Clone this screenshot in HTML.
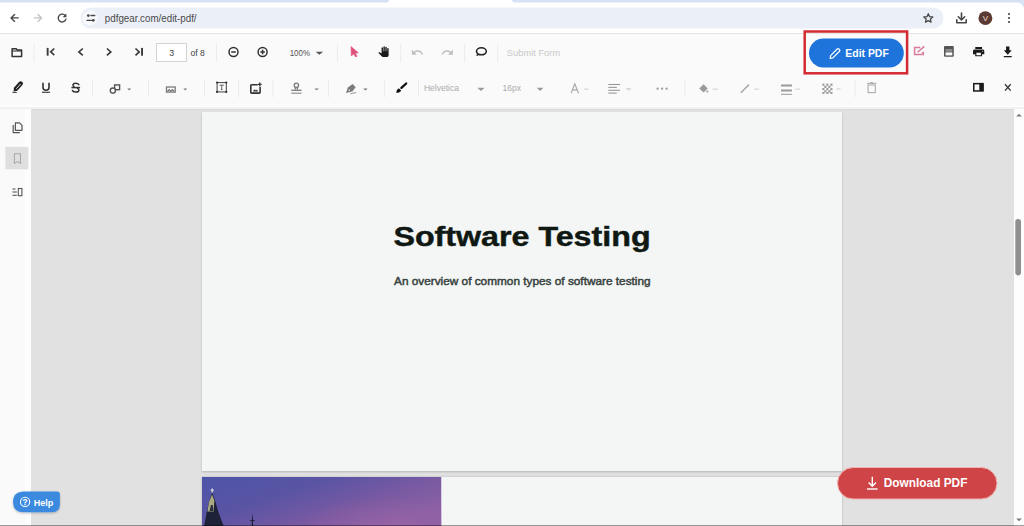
<!DOCTYPE html>
<html><head><meta charset="utf-8">
<style>
*{margin:0;padding:0;box-sizing:border-box}
html,body{width:1024px;height:526px;overflow:hidden;background:#fff;font-family:"Liberation Sans",sans-serif}
.a{position:absolute}
svg{position:absolute;left:0;top:0;overflow:visible}
text{font-family:"Liberation Sans",sans-serif}
#tb{left:0;top:34px;width:1024px;height:75px;background:#fafafa}
#side{left:0;top:109px;width:31px;height:417px;background:#fafafa;border-right:6px solid #fdfdfd}
#view{left:31px;top:109px;width:983px;height:417px;background:#e1e1e1}
#scroll{left:1014px;top:109px;width:10px;height:417px;background:#fdfdfd}
#page1{left:202px;top:112px;width:640px;height:359px;background:#f4f6f5;box-shadow:0 1px 2px rgba(0,0,0,.2)}
#page2{left:202px;top:477px;width:640px;height:60px;background:#f4f6f5;box-shadow:0 0 2px rgba(0,0,0,.2)}
</style></head><body>
<div id="tb" class="a"></div>
<div id="side" class="a"></div>
<div id="view" class="a"></div>
<div id="scroll" class="a"></div>
<div id="page1" class="a"></div>
<div id="page2" class="a"></div>

<svg width="1024" height="526" viewBox="0 0 1024 526">
<!-- browser chrome -->
<rect x="0" y="0" width="1024" height="33" fill="#fff"/>
<rect x="-10" y="-4" width="399" height="6.5" rx="3" fill="#d6e1f3"/>
<rect x="512" y="-4" width="522" height="6.5" rx="3" fill="#d6e1f3"/>
<path d="M1016 2.5H1024V10Q1024 2.5 1016 2.5Z" fill="#d6e1f3"/>
<rect x="0" y="33" width="1024" height="1" fill="#e4e4e4"/>
<rect x="80.5" y="7.5" width="863" height="21" rx="10.5" fill="#ebeff7"/>
<circle cx="90" cy="18" r="7.5" fill="#f7f9fc"/>
<g fill="none" stroke="#474747" stroke-width="1.35" stroke-linecap="round" stroke-linejoin="round">
 <path d="M18.2 17.9H11.2M14.6 14.4L11 17.9L14.6 21.4"/>
 <path d="M34.5 17.9H41.3M38 14.4L41.5 17.9L38 21.4" stroke="#c2c2c2"/>
 <path d="M65.6 16.2A3.9 3.9 0 1 0 65.9 19.2"/>
</g>
<path d="M66.4 13.4V17.2H62.6Z" fill="#474747"/>
<g stroke="#474747" stroke-width="1.3" stroke-linecap="round">
 <line x1="91" y1="15.5" x2="94.8" y2="15.5"/>
 <line x1="87" y1="20.4" x2="91.5" y2="20.4"/>
</g>
<circle cx="88.3" cy="15.6" r="1.35" fill="#474747"/>
<circle cx="93.3" cy="20.3" r="1.4" fill="#474747"/>
<text x="104.8" y="22" font-size="10" fill="#4a4a4a" textLength="91.8" lengthAdjust="spacingAndGlyphs">pdfgear.com/edit-pdf/</text>
<path d="M928.3 13.8L929.6 16.7L932.8 17L930.4 19.1L931.1 22.2L928.3 20.6L925.5 22.2L926.2 19.1L923.8 17L927 16.7Z" fill="none" stroke="#474747" stroke-width="1.3" stroke-linejoin="round"/>
<g fill="none" stroke="#474747" stroke-width="1.6" stroke-linecap="round" stroke-linejoin="round">
 <path d="M961.5 13V19.8M958.3 16.8L961.5 20L964.7 16.8"/>
 <path d="M956.8 19.8V22.7H966.2V19.8"/>
</g>
<circle cx="985.4" cy="18.2" r="6.9" fill="#5b3b31"/>
<text x="985.4" y="21.2" font-size="8" fill="#f3dcd4" text-anchor="middle">V</text>
<circle cx="1009" cy="14" r="1.1" fill="#474747"/>
<circle cx="1009" cy="18" r="1.1" fill="#474747"/>
<circle cx="1009" cy="22" r="1.1" fill="#474747"/>

<!-- PDF toolbar row1 -->
<g fill="#ececec">
 <rect x="33.5" y="44" width="1" height="18.5"/>
 <rect x="216" y="44" width="1" height="18"/>
 <rect x="337" y="44" width="1" height="18"/>
 <rect x="400.2" y="44" width="1" height="18"/>
 <rect x="464.1" y="44" width="1" height="18"/>
 <rect x="497.2" y="44" width="1" height="18"/>
</g>
<path d="M12.1 48.8H16.2L17.5 50.1H21.6V56.6H12.1Z" fill="none" stroke="#333" stroke-width="1.5" stroke-linejoin="round"/>
<line x1="12.1" y1="51" x2="21.6" y2="51" stroke="#333" stroke-width="1.1"/>
<rect x="46.7" y="47.9" width="1.9" height="7.8" fill="#3a3a3a"/>
<g fill="none" stroke="#3a3a3a" stroke-width="1.65" stroke-linejoin="miter">
 <path d="M54.3 48.5L50.7 51.8L54.3 55.2"/>
 <path d="M82.8 48.5L78.9 51.9L82.8 55.3"/>
 <path d="M106.9 48.5L110.8 51.9L106.9 55.3"/>
 <path d="M135.5 48.5L139.2 51.9L135.5 55.3"/>
</g>
<rect x="141.1" y="47.9" width="1.9" height="7.8" fill="#3a3a3a"/>
<rect x="156.5" y="43.5" width="30" height="18" fill="#fff" stroke="#d3d3d3" stroke-width="1"/>
<text x="171.7" y="55.9" font-size="8.8" fill="#444" text-anchor="middle">3</text>
<text x="190.4" y="56" font-size="9.4" fill="#444" textLength="14.4" lengthAdjust="spacingAndGlyphs">of 8</text>
<g fill="none" stroke="#333" stroke-width="1.5">
 <circle cx="233.5" cy="52" r="4.5"/>
 <line x1="231.2" y1="52" x2="235.8" y2="52"/>
 <circle cx="262.6" cy="52" r="4.5"/>
 <line x1="260.3" y1="52" x2="264.9" y2="52"/>
 <line x1="262.6" y1="49.7" x2="262.6" y2="54.3"/>
</g>
<text x="289.7" y="55.8" font-size="9.6" fill="#555" textLength="20.3" lengthAdjust="spacingAndGlyphs">100%</text>
<path d="M315.6 51.8H323.1L319.35 54.8Z" fill="#555"/>
<path d="M351 46.5L358.3 52.8L355.3 53.2L357.1 56.2L355.6 56.9L353.8 53.9L351.3 55.9Z" fill="#e0527d" stroke="#e0527d" stroke-width="0.6" stroke-linejoin="round"/>
<path transform="translate(377.8 46.25) scale(0.47 0.445)" fill="#1a1a1a" d="M23 5.5V20c0 2.2-1.8 4-4 4h-7.3c-1.08 0-2.1-.43-2.85-1.19L1 14.83s1.26-1.23 1.3-1.25c.22-.19.49-.29.79-.29.22 0 .42.06.6.16.04.01 4.31 2.46 4.31 2.46V4c0-.83.67-1.5 1.5-1.5S11 3.17 11 4v7h1V1.5c0-.83.67-1.5 1.5-1.5S15 .67 15 1.5V11h1V2.5c0-.83.67-1.5 1.5-1.5s1.5.67 1.5 1.5V11h1V5.5c0-.83.67-1.5 1.5-1.5s1.5.67 1.5 1.5z"/>
<path transform="translate(410.8 45.85) scale(0.55)" fill="#bdbdbd" d="M12.5 8c-2.65 0-5.05.99-6.9 2.6L2 7v9h9l-3.62-3.62c1.39-1.16 3.16-1.88 5.12-1.88 3.54 0 6.55 2.31 7.6 5.5l2.37-.78C21.08 11.03 17.15 8 12.5 8z"/>
<path transform="translate(440.75 45.85) scale(0.55)" fill="#bdbdbd" d="M18.4 10.6C16.55 8.99 14.15 8 11.5 8c-4.65 0-8.58 3.03-9.96 7.22L3.9 16c1.05-3.19 4.05-5.5 7.6-5.5 1.95 0 3.73.72 5.12 1.88L13 16h9V7l-3.6 3.6z"/>
<g fill="none" stroke="#222" stroke-width="1.6" stroke-linejoin="round">
 <ellipse cx="481.4" cy="51.3" rx="4.9" ry="3.5"/>
</g>
<path d="M477.2 53.3L476.2 56.2L480.2 54.6Z" fill="#222"/>
<text x="506.8" y="56" font-size="9.6" fill="#c9c9c9" textLength="53.4" lengthAdjust="spacingAndGlyphs">Submit Form</text>
<rect x="804.7" y="31.5" width="102.4" height="41.8" fill="none" stroke="#d42a32" stroke-width="2.5"/>
<rect x="809" y="38.6" width="94.8" height="28.8" rx="14.4" fill="#1f74dc"/>
<path d="M830.2 58.3L830.6 55.6L837.2 49A1.2 1.2 0 0 1 838.9 49L839.5 49.6A1.2 1.2 0 0 1 839.5 51.3L832.9 57.9Z" fill="none" stroke="#fff" stroke-width="1.2" stroke-linejoin="round"/>
<text x="845.3" y="56.6" font-size="10.9" font-weight="bold" fill="#fff" textLength="43.5" lengthAdjust="spacingAndGlyphs">Edit PDF</text>
<g fill="none" stroke="#db7b9b" stroke-width="1.5">
 <path d="M920.2 47.4H914.6V54.5H922.5"/>
 <path d="M917.6 52.3L924.3 46.4"/>
</g>
<path d="M921.2 52.8L924 51.4L924 56.2Z" fill="#db7b9b"/>
<rect x="944" y="46" width="9.8" height="10.8" rx="1" fill="#555"/>
<rect x="945.5" y="49" width="6.8" height="2.8" fill="#8c8c8c"/>
<rect x="945.5" y="52.4" width="6.8" height="3" fill="#fafafa"/>
<path transform="translate(971.87 45.44) scale(0.565 0.52)" fill="#1a1a1a" d="M19 8H5c-1.66 0-3 1.34-3 3v6h4v4h12v-4h4v-6c0-1.66-1.34-3-3-3zm-3 11H8v-5h8v5zm3-7c-.55 0-1-.45-1-1s.45-1 1-1 1 .45 1 1-.45 1-1 1zm-1-9H6v4h12V3z"/>
<path transform="translate(1000.98 44.5) scale(0.564 0.635)" fill="#1a1a1a" d="M19 9h-4V3H9v6H5l7 7 7-7zM5 18v2h14v-2H5z"/>

<!-- row2 -->
<g fill="#ececec">
 <rect x="92" y="80" width="1" height="17"/>
 <rect x="148" y="80" width="1" height="17"/>
 <rect x="204" y="80" width="1" height="17"/>
 <rect x="238.2" y="80" width="1" height="17"/>
 <rect x="272.3" y="80" width="1" height="17"/>
 <rect x="328" y="80" width="1" height="17"/>
 <rect x="384.1" y="80" width="1" height="17"/>
 <rect x="418" y="80" width="1" height="17"/>
 <rect x="684.4" y="80" width="1" height="17"/>
 <rect x="854.5" y="80" width="1" height="17"/>
</g>
<g transform="translate(17.6 87) rotate(-48)">
 <path d="M-3 -2.3H4.6A2.3 2.3 0 0 1 4.6 2.3H-3L-6 0Z" fill="#222"/>
 <path d="M-2.2 0.2H4.2" stroke="#fafafa" stroke-width="0.8"/>
</g>
<line x1="12.4" y1="92.4" x2="16.8" y2="92.4" stroke="#222" stroke-width="0.9"/>
<path d="M43 82.8V87.3Q43 90.3 46 90.3Q49 90.3 49 87.3V82.8" fill="none" stroke="#333" stroke-width="1.6"/>
<rect x="41.9" y="91.7" width="8.2" height="1.1" fill="#333"/>
<g fill="none" stroke="#333" stroke-width="1.5" stroke-linecap="round">
 <path d="M78.8 84.6Q77.9 83.3 75.9 83.3Q73 83.3 73 85.3Q73 86.4 74.2 86.9"/>
 <path d="M77.6 88.4Q78.9 89 78.9 90.2Q78.9 92 75.9 92Q73.4 92 72.4 90.5"/>
 <line x1="71.4" y1="87.6" x2="80.1" y2="87.6" stroke-linecap="butt"/>
</g>
<g fill="none" stroke="#555" stroke-width="1.4">
 <rect x="114.6" y="84.9" width="5" height="4.8"/>
 <circle cx="112.9" cy="90.6" r="2.6" fill="#fafafa"/>
</g>
<g fill="#777">
 <path d="M127.3 88.6H131.1L129.2 90.6Z"/>
 <path d="M183.4 88.6H187.1L185.25 90.6Z"/>
 <path d="M314.3 88.6H318.9L316.6 90.3Z"/>
 <path d="M363.3 88.6H367.6L365.45 90.4Z"/>
</g>
<g fill="none" stroke="#7a7a7a" stroke-width="1.3">
 <rect x="166.5" y="87" width="8.7" height="5.1"/>
 <path d="M167.5 91.5L169.2 89.6L170.8 91.2L172.4 89.6L174.2 91.5"/>
</g>
<g>
 <rect x="217.1" y="82.6" width="9.2" height="9.3" fill="none" stroke="#444" stroke-width="1"/>
 <circle cx="217.1" cy="82.6" r="1.1" fill="#333"/><circle cx="226.3" cy="82.6" r="1.1" fill="#333"/>
 <circle cx="217.1" cy="91.9" r="1.1" fill="#333"/><circle cx="226.3" cy="91.9" r="1.1" fill="#333"/>
 <path d="M219.6 85.2H223.8M221.7 85.2V89.6M220.8 89.6H222.6" fill="none" stroke="#555" stroke-width="0.9"/>
</g>
<g fill="none" stroke="#333" stroke-width="1.6">
 <path d="M257.8 84.7H251.6A0.8 0.8 0 0 0 250.8 85.5V92.3A0.8 0.8 0 0 0 251.6 93.1H259.3A0.8 0.8 0 0 0 260.1 92.3V86.8"/>
</g>
<path d="M259.8 82.6V86.2M258 84.4H261.6" stroke="#333" stroke-width="1.3"/>
<path d="M252.8 91.5L254.6 89.3L255.9 90.6L256.9 89.6L258.2 91.5Z" fill="#333"/>
<g fill="none" stroke="#7a7a7a" stroke-width="1.3">
 <circle cx="296.4" cy="85.3" r="2.2"/>
 <path d="M295.4 87.4V89.6M297.4 87.4V89.6"/>
 <line x1="291.3" y1="90.3" x2="301.5" y2="90.3"/>
 <line x1="291.3" y1="93.2" x2="301.5" y2="93.2" stroke-width="1"/>
</g>
<path d="M346 93L347.8 87.6L352.6 84.1L355.7 87.3L352.4 91.6Z" fill="#7c7c7c"/>
<circle cx="349.3" cy="90.2" r="0.8" fill="#e8e8e8"/>
<path d="M350.3 93.9Q353 92.9 356.3 92.6" fill="none" stroke="#8a8a8a" stroke-width="0.9"/>
<line x1="401.4" y1="87.9" x2="406.2" y2="83.5" stroke="#111" stroke-width="2.3" stroke-linecap="round"/>
<path d="M396.2 92.7Q396.3 89.2 398.8 88.2L401.2 90.4Q400.2 92.7 396.2 92.7Z" fill="#111"/>
<text x="423.9" y="90.8" font-size="9.2" fill="#ababab" textLength="35.1" lengthAdjust="spacingAndGlyphs">Helvetica</text>
<path d="M477.2 87.8H484.7L480.95 91Z" fill="#9a9a9a"/>
<text x="502.5" y="90.8" font-size="9.2" fill="#ababab" textLength="18.5" lengthAdjust="spacingAndGlyphs">16px</text>
<path d="M536.7 87.8H543.5L540.1 91Z" fill="#9a9a9a"/>
<path d="M571.1 93.3L574.8 83.7L578.5 93.3M572.5 89.9H577.1" fill="none" stroke="#a8a8a8" stroke-width="1.1"/>
<g fill="#cfcfcf">
 <rect x="584" y="88.6" width="4.5" height="1"/>
 <path d="M625.4 88.3H631.6L628.5 90.6Z"/>
 <rect x="712.6" y="88.6" width="5.4" height="1"/>
 <rect x="754.3" y="88.6" width="4.7" height="1"/>
 <rect x="795.3" y="88.6" width="4.7" height="1"/>
 <rect x="836.6" y="88.4" width="3.9" height="1"/>
</g>
<g stroke="#9a9a9a" stroke-width="1.1">
 <line x1="608.3" y1="84.5" x2="620" y2="84.5"/>
 <line x1="608.3" y1="87.4" x2="616.8" y2="87.4"/>
 <line x1="608.3" y1="90.3" x2="620" y2="90.3"/>
 <line x1="608.3" y1="93.1" x2="616.8" y2="93.1"/>
</g>
<g fill="#9a9a9a">
 <circle cx="657.6" cy="88.7" r="1.15"/><circle cx="662.1" cy="88.7" r="1.15"/><circle cx="666.6" cy="88.7" r="1.15"/>
</g>
<path d="M703.6 84.2L699.2 88.5L703.6 92.6L707.7 88.5Z" fill="#9a9a9a"/>
<circle cx="707.3" cy="91.6" r="1" fill="#9a9a9a"/>
<line x1="740.8" y1="92.7" x2="749" y2="84.6" stroke="#a8a8a8" stroke-width="1.5"/>
<g fill="#9a9a9a">
 <rect x="781" y="84.5" width="10.9" height="2"/>
 <rect x="781" y="89.5" width="10.9" height="2"/>
 <rect x="781" y="93.8" width="10.9" height="1"/>
</g>
<g fill="#9f9f9f">
 <rect x="822.3" y="83.6" width="2.2" height="2.2"/><rect x="826.3" y="83.6" width="2.2" height="2.2"/><rect x="830.3" y="83.6" width="2.2" height="2.2"/>
 <rect x="824.3" y="85.8" width="2.2" height="2.2"/><rect x="828.3" y="85.8" width="2.2" height="2.2"/>
 <rect x="822.3" y="88" width="2.2" height="2.2"/><rect x="826.3" y="88" width="2.2" height="2.2"/><rect x="830.3" y="88" width="2.2" height="2.2"/>
 <rect x="824.3" y="90.2" width="2.2" height="2.2"/><rect x="828.3" y="90.2" width="2.2" height="2.2"/>
 <rect x="822.3" y="92" width="2.2" height="2"/><rect x="826.3" y="92" width="2.2" height="2"/><rect x="830.3" y="92" width="2.2" height="2"/>
</g>
<g fill="none" stroke="#ababab" stroke-width="1.1">
 <line x1="867" y1="83.4" x2="876.4" y2="83.4"/>
 <rect x="868.1" y="85" width="7.2" height="7.6"/>
</g>
<rect x="870.5" y="82" width="2.4" height="1" fill="#ababab"/>
<rect x="973.75" y="83.65" width="9.3" height="7.3" fill="none" stroke="#1a1a1a" stroke-width="1.5"/>
<rect x="979.3" y="83.65" width="4" height="7.3" fill="#1a1a1a"/>
<path d="M1005 84.3L1010.7 90.6M1010.7 84.3L1005 90.6" stroke="#333" stroke-width="1.3"/>

<rect x="0" y="105.5" width="1024" height="1.5" fill="#fefefe"/>
<rect x="0" y="107" width="1024" height="2" fill="#f1f1f1"/>
<rect x="31" y="109" width="983" height="1" fill="#dadada"/>
<!-- sidebar -->
<rect x="5.4" y="146.9" width="22.9" height="22.4" fill="#dfdfdf"/>
<g fill="none" stroke="#555" stroke-width="1.2" stroke-linejoin="round">
 <path d="M15.4 122.8H19.5L22 125.3V130.3H15.4Z"/>
 <path d="M13.2 125V132.7H19.8"/>
</g>
<path d="M14.4 153.7H20.5V163.4L17.45 161.6L14.4 163.4Z" fill="none" stroke="#a8a8a8" stroke-width="1.1" stroke-linejoin="round"/>
<g fill="none" stroke="#555" stroke-width="1.1">
 <rect x="18.3" y="188.5" width="3.6" height="7.2"/>
 <line x1="12.5" y1="189" x2="15.5" y2="189"/>
 <line x1="12.5" y1="192" x2="16.8" y2="192"/>
 <line x1="12.5" y1="195.3" x2="16.8" y2="195.3"/>
</g>

<!-- scrollbar -->
<path d="M1016.2 116.6L1019 113.8L1021.8 116.6Z" fill="#777"/>
<rect x="1015.3" y="219" width="5.7" height="56.4" rx="2.8" fill="#8f8f8f"/>
<path d="M1016.2 518.4L1019 521.2L1021.8 518.4Z" fill="#777"/>

<!-- page text -->
<text x="393.4" y="245.6" font-size="27" font-weight="bold" fill="#0f1812" stroke="#0f1812" stroke-width="0.45" textLength="257.2" lengthAdjust="spacingAndGlyphs">Software Testing</text>
<text x="394" y="284.7" font-size="11" fill="#36423d" stroke="#36423d" stroke-width="0.45" textLength="256.6" lengthAdjust="spacingAndGlyphs">An overview of common types of software testing</text>

<!-- page2 image -->
<defs>
 <linearGradient id="sky" x1="0" y1="0" x2="1" y2="0.6">
  <stop offset="0" stop-color="#4e55a8"/>
  <stop offset="0.4" stop-color="#5a54a4"/>
  <stop offset="0.75" stop-color="#7a5aa2"/>
  <stop offset="1" stop-color="#8a60a6"/>
 </linearGradient>
 <radialGradient id="pink" cx="0.5" cy="0.5" r="0.5">
  <stop offset="0" stop-color="#a066a6" stop-opacity="0.55"/>
  <stop offset="1" stop-color="#a0609f" stop-opacity="0"/>
 </radialGradient>
 <clipPath id="imgclip"><rect x="202" y="477" width="239.5" height="49"/></clipPath>
</defs>
<g clip-path="url(#imgclip)">
 <rect x="202" y="477" width="239.5" height="49" fill="url(#sky)"/>
 <ellipse cx="395" cy="526" rx="95" ry="30" fill="url(#pink)"/>
 <path d="M204 526L207 511L209.2 501L212.2 492.5L215.3 501L218 511L223.6 526Z" fill="#1e2238"/>
 <path d="M207.4 511.5L209 502L212 494.5L214.4 500.5L213.6 511.5Z" fill="#b8b98a" opacity="0.9"/>
 <path d="M209.5 511L211 505L212.8 505L213.3 511Z" fill="#2a2e40"/>
 <rect x="211.6" y="488.5" width="1.2" height="4" fill="#e6e6e0"/>
 <rect x="210.6" y="489.6" width="3.2" height="1" fill="#e6e6e0"/>
 <path d="M251.7 526L252 517L252.4 513.5L252.8 517L253.1 526Z" fill="#1c1f36"/>
 <rect x="250.3" y="520" width="4.2" height="1.1" fill="#1c1f36"/>
</g>
<rect x="0" y="525" width="1024" height="1" fill="#000" opacity="0.38"/>

<!-- help button -->
<path d="M24 491.4H57Q59.9 491.4 59.9 494.3V504.3Q59.9 512.3 51.9 512.3H23.5Q13.1 512.3 13.1 501.9Q13.1 491.4 24 491.4Z" fill="#3a8ae0" filter="url(#sh)"/>
<defs><filter id="sh" x="-20%" y="-30%" width="140%" height="170%"><feDropShadow dx="0" dy="1" stdDeviation="1" flood-color="#000" flood-opacity="0.25"/></filter></defs>
<circle cx="25.1" cy="501.9" r="4.6" fill="none" stroke="#fff" stroke-width="1.1"/>
<text x="25.1" y="505" font-size="8.4" font-weight="bold" fill="#fff" text-anchor="middle">?</text>
<text x="33.8" y="505.6" font-size="9.2" font-weight="bold" fill="#fff" textLength="19.6" lengthAdjust="spacingAndGlyphs">Help</text>

<!-- download button -->
<rect x="837.5" y="467.5" width="159.5" height="31.5" rx="15.75" fill="#cf4446" stroke="#f0b5b0" stroke-width="1"/>
<g fill="none" stroke="#fff" stroke-width="1.4">
 <path d="M872.3 476.8V486.3M868.6 482.6L872.3 486.3L876 482.6"/>
 <line x1="867" y1="489" x2="877.6" y2="489"/>
</g>
<text x="883.8" y="487" font-size="12" font-weight="bold" fill="#fff" textLength="83.6" lengthAdjust="spacingAndGlyphs">Download PDF</text>
</svg>
</body></html>
